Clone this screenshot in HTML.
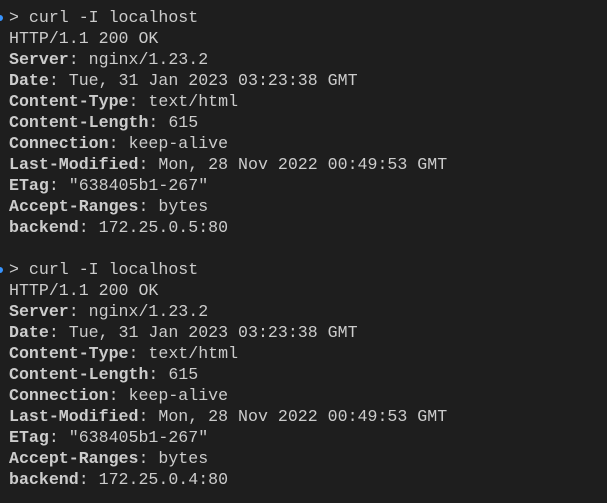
<!DOCTYPE html>
<html><head><meta charset="utf-8"><style>
html,body{margin:0;padding:0;background:#1e1e1e;width:607px;height:503px;overflow:hidden}
pre{margin:0;position:absolute;left:9px;top:7px;font-family:"Liberation Mono","DejaVu Sans Mono",monospace;font-size:16.6px;line-height:21px;color:#cccccc}
b{font-weight:bold;color:#cccccc}
.dot{position:absolute;left:-1px;width:4px;height:6px;background:#3794ff;border-radius:0 3px 3px 0}
</style></head><body>
<div class="dot" style="top:15px"></div>
<div class="dot" style="top:267px"></div>
<pre>&gt; curl -I localhost
HTTP/1.1 200 OK
<b>Server</b>: nginx/1.23.2
<b>Date</b>: Tue, 31 Jan 2023 03:23:38 GMT
<b>Content-Type</b>: text/html
<b>Content-Length</b>: 615
<b>Connection</b>: keep-alive
<b>Last-Modified</b>: Mon, 28 Nov 2022 00:49:53 GMT
<b>ETag</b>: "638405b1-267"
<b>Accept-Ranges</b>: bytes
<b>backend</b>: 172.25.0.5:80

&gt; curl -I localhost
HTTP/1.1 200 OK
<b>Server</b>: nginx/1.23.2
<b>Date</b>: Tue, 31 Jan 2023 03:23:38 GMT
<b>Content-Type</b>: text/html
<b>Content-Length</b>: 615
<b>Connection</b>: keep-alive
<b>Last-Modified</b>: Mon, 28 Nov 2022 00:49:53 GMT
<b>ETag</b>: "638405b1-267"
<b>Accept-Ranges</b>: bytes
<b>backend</b>: 172.25.0.4:80</pre>
</body></html>
